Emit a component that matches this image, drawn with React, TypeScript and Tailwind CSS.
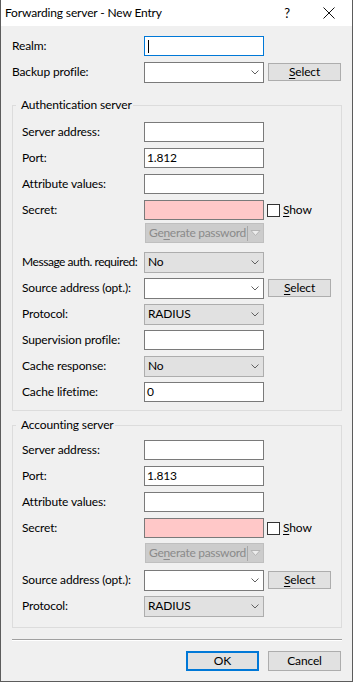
import React from 'react';

function Chevron() {
  return (
    <svg width="8" height="5" viewBox="0 0 8 5" className="shrink-0">
      <polyline points="0.5,0.5 4,4 7.5,0.5" fill="none" stroke="#606060" strokeWidth="1" />
    </svg>
  );
}

function Edit({ value = '', focused = false, secret = false }: { value?: string; focused?: boolean; secret?: boolean }) {
  const tone = focused
    ? 'border-[#0078d7] bg-white'
    : secret
      ? 'border-[#7a7a7a] bg-[#ffc8c8]'
      : 'border-[#7a7a7a] bg-white';
  return (
    <div className={`flex h-[20px] w-[120px] shrink-0 items-center border px-[2px] ${tone}`}>
      {focused && <span className="ml-[1px] h-[13px] w-px bg-black" />}
      {value}
    </div>
  );
}

function Combo({ value = '', list = false }: { value?: string; list?: boolean }) {
  const tone = list ? 'border-[#adadad] bg-[#e1e1e1] pl-[3px]' : 'border-[#7a7a7a] bg-white pl-[2px]';
  return (
    <div className={`flex h-[21px] w-[120px] shrink-0 items-center justify-between border pr-[4px] ${tone}`}>
      <span>{value}</span>
      <Chevron />
    </div>
  );
}

function Btn({ wide = true }: { wide?: boolean }) {
  return (
    <div
      className={`ml-[4px] flex h-[18px] shrink-0 items-center justify-center border border-[#adadad] bg-[#e1e1e1] ${
        wide ? 'w-[73px]' : 'w-[63px]'
      }`}
    >
      <span>
        <span className="underline underline-offset-2">S</span>elect
      </span>
    </div>
  );
}

function Row({
  label,
  narrow = false,
  tight = false,
  children,
}: {
  label: string;
  narrow?: boolean;
  tight?: boolean;
  children?: React.ReactNode;
}) {
  return (
    <div className="flex h-[26px] items-center whitespace-nowrap">
      <div className={`${narrow ? 'w-[122px]' : 'w-[132px]'} shrink-0 ${tight ? 'tracking-[-0.45px]' : ''}`}>{label}</div>
      {children}
    </div>
  );
}

function SecretRows({ top }: { top: string }) {
  return (
    <>
      <Row label="Secret:" narrow>
        <Edit secret />
        <div className="ml-[3px] h-[13px] w-[13px] border border-[#333333] bg-white" />
        <span className="ml-[3px]">
          <span className="underline underline-offset-2">S</span>how
        </span>
      </Row>
      <div className={`flex h-[26px] items-start pl-[123px] ${top}`}>
        <div className="flex h-[20px] w-[119px] items-center overflow-hidden whitespace-nowrap border border-[#bfbfbf] bg-[#cccccc] text-[#8a8a8a]">
          <span className="flex-1 pl-[3px] tracking-[-0.3px]">
            Ge<span className="underline underline-offset-2">n</span>erate password
          </span>
          <span className="h-[15px] w-px shrink-0 bg-[#a8a8a8]" />
          <svg width="13" height="8" viewBox="0 0 13 8" className="mx-[1px] shrink-0">
            <polygon points="2,1.5 11,1.5 6.5,6.5" fill="#ececec" stroke="#b4b4b4" strokeWidth="1" />
          </svg>
        </div>
      </div>
    </>
  );
}

function Legend({ text }: { text: string }) {
  return <legend className="-ml-[6px] pl-[5px] pr-[1px] leading-[16px]">{text}</legend>;
}

export default function App() {
  return (
    <div className="flex h-[682px] w-[353px] flex-col border-x border-b border-[#5c5c5c] bg-[#f0f0f0] font-['Segoe_UI','Lato',sans-serif] text-[12px] leading-[16px] tracking-[-0.15px] text-black">
      <div className="flex h-[26px] shrink-0 items-center bg-white pl-[4px]">
        <span>Forwarding server - New Entry</span>
        <span className="ml-auto mr-[33px] text-[13px]">?</span>
        <svg width="12" height="12" viewBox="0 0 12 12" className="mr-[17px]">
          <path d="M0.5 0.5 L11.5 11.5 M11.5 0.5 L0.5 11.5" stroke="#111111" strokeWidth="1" />
        </svg>
      </div>

      <div className="px-[11px] pt-[7px]">
        <Row label="Realm:">
          <Edit focused />
        </Row>
        <Row label="Backup profile:">
          <Combo />
          <Btn />
        </Row>
      </div>

      <fieldset className="mx-[11px] mt-[12px] w-[330px] border border-[#dcdcdc] px-[9px] pt-[6px] pb-[5px]">
        <Legend text="Authentication server" />
        <Row label="Server address:" narrow>
          <Edit />
        </Row>
        <Row label="Port:" narrow>
          <Edit value="1.812" />
        </Row>
        <Row label="Attribute values:" narrow>
          <Edit />
        </Row>
        <SecretRows top="pt-0" />
        <Row label="Message auth. required:" narrow tight>
          <Combo list value="No" />
        </Row>
        <Row label="Source address (opt.):" narrow>
          <Combo />
          <Btn wide={false} />
        </Row>
        <Row label="Protocol:" narrow>
          <Combo list value="RADIUS" />
        </Row>
        <Row label="Supervision profile:" narrow>
          <Edit />
        </Row>
        <Row label="Cache response:" narrow>
          <Combo list value="No" />
        </Row>
        <Row label="Cache lifetime:" narrow>
          <Edit value="0" />
        </Row>
      </fieldset>

      <fieldset className="mx-[11px] mt-[6px] w-[330px] border border-[#dcdcdc] px-[9px] pt-[4px] pb-[8px]">
        <Legend text="Accounting server" />
        <Row label="Server address:" narrow>
          <Edit />
        </Row>
        <Row label="Port:" narrow>
          <Edit value="1.813" />
        </Row>
        <Row label="Attribute values:" narrow>
          <Edit />
        </Row>
        <SecretRows top="pt-[2px]" />
        <Row label="Source address (opt.):" narrow>
          <Combo />
          <Btn wide={false} />
        </Row>
        <Row label="Protocol:" narrow>
          <Combo list value="RADIUS" />
        </Row>
      </fieldset>

      <div className="mx-[11px] mt-[11px] h-[2px] w-[330px] border-t border-b border-t-[#a0a0a0] border-b-white" />

      <div className="mt-[10px] flex justify-end gap-[9px] pr-[11px]">
        <div className="flex h-[20px] w-[73px] items-center justify-center border-2 border-[#0078d7] bg-[#e1e1e1]">OK</div>
        <div className="flex h-[20px] w-[73px] items-center justify-center border border-[#adadad] bg-[#e1e1e1]">Cancel</div>
      </div>
    </div>
  );
}
